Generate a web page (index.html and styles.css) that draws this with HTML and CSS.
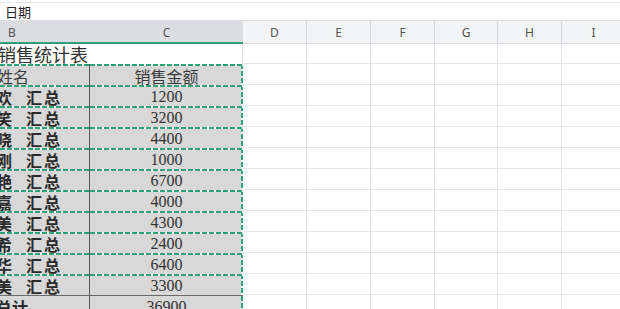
FILE: index.html
```html
<!DOCTYPE html>
<html lang="zh">
<head>
<meta charset="utf-8">
<title>销售统计表</title>
<link rel="stylesheet" href="styles.css">
</head>
<body>
<div class="formula"><span class="fx">日期</span></div>
<div class="sheet">
  <div class="hd sel first">B</div><div class="hd sel">C</div><div class="hd">D</div><div class="hd">E</div><div class="hd">F</div><div class="hd">G</div><div class="hd">H</div><div class="hd">I</div>

  <div class="title">销售统计表</div><div class="e"></div><div class="e"></div><div class="e"></div><div class="e"></div><div class="e"></div><div class="e"></div>

  <div class="cb hrow"><span class="lbl">姓名</span></div><div class="cc hrow">销售金额</div><div class="e"></div><div class="e"></div><div class="e"></div><div class="e"></div><div class="e"></div><div class="e"></div>

  <div class="cb"><span class="nm">欢</span><span class="sum">汇总</span></div><div class="cc num">1200</div><div class="e"></div><div class="e"></div><div class="e"></div><div class="e"></div><div class="e"></div><div class="e"></div>
  <div class="cb"><span class="nm">笑</span><span class="sum">汇总</span></div><div class="cc num">3200</div><div class="e"></div><div class="e"></div><div class="e"></div><div class="e"></div><div class="e"></div><div class="e"></div>
  <div class="cb"><span class="nm">晓</span><span class="sum">汇总</span></div><div class="cc num">4400</div><div class="e"></div><div class="e"></div><div class="e"></div><div class="e"></div><div class="e"></div><div class="e"></div>
  <div class="cb"><span class="nm">刚</span><span class="sum">汇总</span></div><div class="cc num">1000</div><div class="e"></div><div class="e"></div><div class="e"></div><div class="e"></div><div class="e"></div><div class="e"></div>
  <div class="cb"><span class="nm">艳</span><span class="sum">汇总</span></div><div class="cc num">6700</div><div class="e"></div><div class="e"></div><div class="e"></div><div class="e"></div><div class="e"></div><div class="e"></div>
  <div class="cb"><span class="nm">嘉</span><span class="sum">汇总</span></div><div class="cc num">4000</div><div class="e"></div><div class="e"></div><div class="e"></div><div class="e"></div><div class="e"></div><div class="e"></div>
  <div class="cb"><span class="nm">美</span><span class="sum">汇总</span></div><div class="cc num">4300</div><div class="e"></div><div class="e"></div><div class="e"></div><div class="e"></div><div class="e"></div><div class="e"></div>
  <div class="cb"><span class="nm">希</span><span class="sum">汇总</span></div><div class="cc num">2400</div><div class="e"></div><div class="e"></div><div class="e"></div><div class="e"></div><div class="e"></div><div class="e"></div>
  <div class="cb"><span class="nm">华</span><span class="sum">汇总</span></div><div class="cc num">6400</div><div class="e"></div><div class="e"></div><div class="e"></div><div class="e"></div><div class="e"></div><div class="e"></div>
  <div class="cb"><span class="nm">美</span><span class="sum">汇总</span></div><div class="cc num">3300</div><div class="e"></div><div class="e"></div><div class="e"></div><div class="e"></div><div class="e"></div><div class="e"></div>
  <div class="cb total"><span class="nm">总计</span></div><div class="cc num total">36900</div><div class="e"></div><div class="e"></div><div class="e"></div><div class="e"></div><div class="e"></div><div class="e"></div>
</div>
</body>
</html>
```

FILE: styles.css
```css
* { box-sizing: border-box; }
html, body {
  margin: 0;
  padding: 0;
  width: 620px;
  height: 309px;
  overflow: hidden;
  background: #fff;
}
body {
  font-family: "Noto Sans CJK SC", "Noto Sans", sans-serif;
  color: #333;
}
.formula {
  margin-top: 2px;
  height: 19px;
  border-top: 1px solid #e6e7ea;
  border-bottom: 1px solid #dcdee2;
  display: flex;
  align-items: center;
  padding-left: 5px;
}
.fx {
  font-size: 13px;
  line-height: 1;
  color: #222;
}
.sheet {
  display: grid;
  grid-template-columns: 90px 153px 64px 64px 64px 63px 64px 64px;
  grid-template-rows: 23px 20px repeat(12, 21px);
  width: 626px;
}
.hd {
  background: #f3f4f6;
  border-right: 1px solid #d6d9de;
  border-bottom: 1px solid #d6d9de;
  display: flex;
  align-items: center;
  justify-content: center;
  font-family: "Noto Sans", "Liberation Sans", sans-serif;
  font-size: 12px;
  color: #555;
  padding-top: 1px;
}
.hd.sel {
  background: #dcdde0;
  border-right: none;
  border-bottom: 2px solid #2f9f78;
}
.hd.first {
  padding-right: 66px;
}
.e {
  border-right: 1px solid #e2e5e9;
  border-bottom: 1px solid #e2e5e9;
}
.title {
  grid-column: span 2;
  border-right: 1px solid #e2e5e9;
  font-size: 18px;
  line-height: 20px;
  margin-left: -2px;
  color: #333;
  white-space: nowrap;
}
.cb, .cc {
  background-color: #d8d8d8;
  background-image: repeating-linear-gradient(90deg, #2fa27a 0 5px, #f4f4f4 5px 7px);
  background-size: 100% 2px;
  background-repeat: no-repeat;
  background-position: 0 0;
  display: flex;
  align-items: center;
  white-space: nowrap;
  overflow: hidden;
  padding-top: 2px;
}
.cb {
  border-right: 1px solid #5a5a5a;
}
.cc {
  justify-content: center;
  background-image:
    repeating-linear-gradient(90deg, #2fa27a 0 5px, #f4f4f4 5px 7px),
    repeating-linear-gradient(180deg, #2fa27a 0 5px, #f4f4f4 5px 7px);
  background-size: 100% 2px, 2px 100%;
  background-position: 0 0, right 0 top 0;
  background-repeat: no-repeat, no-repeat;
}
.hrow {
  font-size: 16px;
  color: #3a3a3a;
}
.lbl {
  margin-left: -3px;
}
.nm, .sum {
  font-size: 16px;
  font-weight: 700;
  color: #2a2a2a;
}
.nm {
  margin-left: -4px;
}
.sum {
  margin-left: 14px;
  letter-spacing: 2px;
}
.num {
  font-family: "Liberation Serif", "DejaVu Serif", serif;
  font-size: 16px;
  color: #333;
}
.cb.total, .cc.total {
  border-top: 1px solid #6a6a6a;
  background-image: none;
}
.cc.total {
  background-image: repeating-linear-gradient(180deg, #2fa27a 0 5px, #f4f4f4 5px 7px);
  background-size: 2px 100%;
  background-position: right 0 top 0;
}
```
